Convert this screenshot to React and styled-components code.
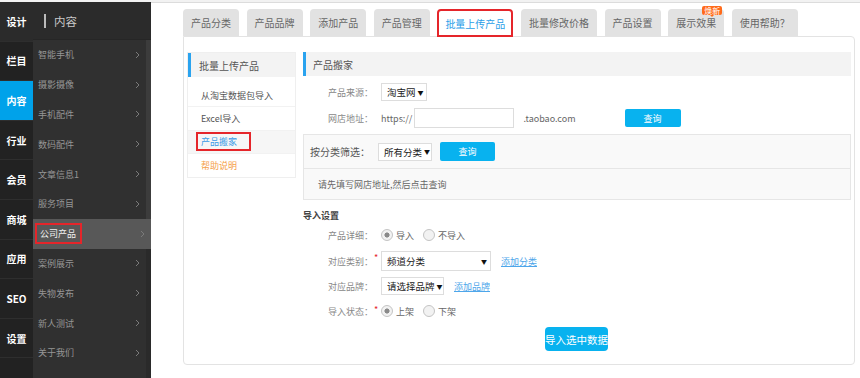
import React from "react";
import styled, { createGlobalStyle } from "styled-components";

const Global = createGlobalStyle`
  html, body { margin: 0; padding: 0; background: #fff; }
  body { font-family: "Noto Sans CJK SC", "Noto Sans", sans-serif; width: 860px; height: 378px; overflow: hidden; }
  * { box-sizing: border-box; }
`;

const Page = styled.div`
  display: flex;
  width: 860px;
  height: 378px;
  border-top: 2px solid #f2f2f2;
`;

/* ---------- left rail ---------- */
const Rail = styled.nav`
  width: 33px;
  background: #222;
  display: flex;
  flex-direction: column;
`;
const RailItem = styled.div`
  height: 39.6px;
  flex: none;
  display: flex;
  align-items: center;
  justify-content: center;
  color: #fff;
  font-size: 10px;
  font-weight: 700;
  border-bottom: 1px solid #2e2e2e;
  background: ${(p) => (p.$active ? "#00a2ea" : p.$head ? "#2b2b2b" : "#222")};
`;

/* ---------- sub menu ---------- */
const Sub = styled.aside`
  width: 118px;
  background: #303030;
  display: flex;
  flex-direction: column;
`;
const SubHead = styled.div`
  height: 38px;
  flex: none;
  background: #2b2b2b;
  display: flex;
  align-items: center;
  padding-left: 11px;
  gap: 8px;
  color: #c8c8c8;
  font-size: 11.5px;
  border-bottom: 1px solid #262626;
`;
const HeadBar = styled.span`
  width: 2px;
  height: 14px;
  background: #bbb;
`;
const SubBody = styled.div`
  flex: 1;
  display: flex;
`;
const SubList = styled.ul`
  list-style: none;
  margin: 0;
  padding: 0;
  flex: 1;
`;
const SubItem = styled.li`
  height: 29.8px;
  display: flex;
  align-items: center;
  justify-content: space-between;
  padding: 0 6px 0 5px;
  margin-right: ${(p) => (p.$active ? "-5px" : "0")};
  position: relative;
  z-index: 1;
  font-size: 9px;
  color: ${(p) => (p.$active ? "#f0f0f0" : "#969696")};
  background: ${(p) => (p.$active ? "#585858" : "transparent")};
`;
const Track = styled.div`
  width: 5px;
  background: #2a2a2a;
`;
const Thumb = styled.div`
  height: 180px;
  background: #3c3c3c;
`;
const Marked = styled.span`
  display: inline-flex;
  align-items: center;
  border: 2px solid #e5252a;
  padding: ${(p) => p.$pad || "2px 4px 2px 3px"};
  margin-left: ${(p) => p.$ml || "-3px"};
`;

const Chevron = () => (
  <svg width="5" height="8" viewBox="0 0 5 8">
    <path d="M1 1 L4 4 L1 7" fill="none" stroke="#7a7a7a" strokeWidth="1" />
  </svg>
);

/* ---------- main ---------- */
const Main = styled.main`
  flex: 1;
  background: #fff;
  border-top: 1px solid #dcdcdc;
  padding: 6px 0 0 32px;
  display: flex;
  flex-direction: column;
`;
const Tabs = styled.div`
  display: flex;
  gap: 7.6px;
  height: 27px;
`;
const Tab = styled.div`
  position: relative;
  height: 27px;
  padding: 0 8px;
  display: flex;
  align-items: center;
  font-size: 10px;
  white-space: nowrap;
  border-radius: 4px 4px 0 0;
  color: ${(p) => (p.$active ? "#2a9ee8" : "#666")};
  background: ${(p) => (p.$active ? "#fff" : "#e2e2e2")};
  border: ${(p) => (p.$active ? "2px solid #e5252a" : "none")};
  ${(p) => p.$active && "padding: 0 6px; height: 28px; z-index: 2;"}
`;
const Badge = styled.span`
  position: absolute;
  top: -3px;
  right: 2px;
  background: #ff6a1a;
  color: #fff;
  font-size: 8px;
  line-height: 9px;
  padding: 0 2px;
  border-radius: 2px;
  &::after {
    content: "";
    position: absolute;
    left: 50%;
    bottom: -2px;
    margin-left: -2px;
    border: 2px solid transparent;
    border-bottom: none;
    border-top-color: #ff6a1a;
  }
`;
const Panel = styled.section`
  width: 672px;
  height: 329px;
  border: 1px solid #e3e3e3;
  border-radius: 0 4px 4px 4px;
  padding: 15px 3px 0 3px;
  display: flex;
  gap: 7px;
  align-items: flex-start;
`;

/* side box */
const SideBox = styled.div`
  width: 109px;
  border: 1px solid #efefef;
`;
const SectionHead = styled.div`
  height: 24px;
  display: flex;
  align-items: center;
  background: #f3f3f3;
  border-left: 3px solid #2aa3ef;
  padding-left: ${(p) => p.$pl || "8px"};
  font-size: 10px;
  color: #555;
`;
const SideList = styled.ul`
  list-style: none;
  margin: 7px 0 0;
  padding: 0;
`;
const SideItem = styled.li`
  height: 23.3px;
  display: flex;
  align-items: center;
  padding-left: 13px;
  font-size: 9px;
  color: ${(p) => p.$color || "#555"};
  background: ${(p) => (p.$sel ? "#f6f6f6" : "transparent")};
  border-bottom: ${(p) => (p.$last ? "none" : "1px solid #f2f2f2")};
`;

/* content */
const Content = styled.div`
  width: 548px;
  display: flex;
  flex-direction: column;
`;
const Row = styled.div`
  display: flex;
  align-items: center;
  height: ${(p) => p.$h || "18px"};
  margin-top: ${(p) => p.$mt || "7px"};
`;
const Label = styled.span`
  width: 70px;
  flex: none;
  text-align: right;
  font-size: 9px;
  color: #888;
  margin-right: ${(p) => (p.$star ? "1px" : "8px")};
  white-space: nowrap;
`;
const Star = styled.span`
  color: #e5252a;
  font-size: 9px;
  width: 7px;
  align-self: flex-start;
  line-height: 14px;
`;
const Select = styled.div`
  flex: none;
  width: ${(p) => p.$w}px;
  height: ${(p) => p.$h || 18}px;
  border: 1px solid #ddd;
  background: #fff;
  display: flex;
  align-items: center;
  justify-content: space-between;
  padding: 0 3px 0 5px;
  font-size: 9.5px;
  color: #222;
  white-space: nowrap;
  overflow: hidden;
  margin-left: ${(p) => p.$ml || "0"};
  &::after {
    content: "▼";
    font-size: 6px;
    color: #111;
    margin-left: 2px;
  }
`;
const Plain = styled.span`
  font-size: 9px;
  color: #666;
  white-space: nowrap;
  margin-left: ${(p) => p.$ml || "0"};
`;
const Input = styled.div`
  width: 100px;
  height: 20px;
  border: 1px solid #ddd;
  margin-left: 2px;
`;
const Button = styled.button`
  flex: none;
  width: ${(p) => p.$w}px;
  height: ${(p) => p.$h || 18}px;
  border: none;
  border-radius: ${(p) => p.$r || "2px"};
  background: #08b2ef;
  color: #fff;
  font-family: inherit;
  font-size: ${(p) => p.$fs || "9px"};
  padding: 0;
  margin-left: ${(p) => p.$ml || "0"};
  white-space: nowrap;
`;
const Filter = styled.div`
  margin-top: 6px;
  border: 1px solid #e6e6e6;
  background: #f9f9f9;
`;
const FilterTop = styled.div`
  height: 34px;
  display: flex;
  align-items: center;
  padding-left: 6px;
  border-bottom: 1px solid #e6e6e6;
  font-size: 10px;
  color: #555;
`;
const FilterNote = styled.div`
  height: 30px;
  display: flex;
  align-items: center;
  padding-left: 14px;
  font-size: 9px;
  color: #666;
`;
const SubTitle = styled.div`
  margin-top: 9px;
  font-size: 9px;
  font-weight: 700;
  color: #444;
  height: 14px;
  line-height: 14px;
`;
const Radio = styled.span`
  display: inline-flex;
  align-items: center;
  gap: 3px;
  font-size: 9px;
  color: #666;
  margin-right: 9px;
  &::before {
    content: "";
    width: 10px;
    height: 10px;
    border-radius: 50%;
    border: 1px solid #c4c4c4;
    background: ${(p) =>
      p.$on ? "radial-gradient(circle, #8a8a8a 0 2.3px, #f2f2f2 2.8px)" : "#f2f2f2"};
  }
`;
const Link = styled.a`
  font-size: 9px;
  color: #4ea6ea;
  text-decoration: underline;
  margin-left: 10px;
`;
const Submit = styled.div`
  display: flex;
  margin-top: 8px;
  padding-left: 242px;
`;

const subItems = [
  "智能手机", "摄影摄像", "手机配件", "数码配件", "文章信息1", "服务项目",
  "公司产品", "案例展示", "失物发布", "新人测试", "关于我们",
];
const rail = ["栏目", "内容", "行业", "会员", "商城", "应用", "SEO", "设置"];
const tabs = [
  "产品分类", "产品品牌", "添加产品", "产品管理", "批量上传产品",
  "批量修改价格", "产品设置", "展示效果", "使用帮助？",
];

export default function App() {
  return (
    <>
      <Global />
      <Page>
        <Rail>
          <RailItem $head>设计</RailItem>
          {rail.map((r) => (
            <RailItem key={r} $active={r === "内容"}>{r}</RailItem>
          ))}
        </Rail>
        <Sub>
          <SubHead>
            <HeadBar />
            内容
          </SubHead>
          <SubBody>
            <SubList>
              {subItems.map((s) => (
                <SubItem key={s} $active={s === "公司产品"}>
                  {s === "公司产品" ? <Marked>{s}</Marked> : s}
                  <Chevron />
                </SubItem>
              ))}
            </SubList>
            <Track>
              <Thumb />
            </Track>
          </SubBody>
        </Sub>
        <Main>
          <Tabs>
            {tabs.map((t) => (
              <Tab key={t} $active={t === "批量上传产品"}>
                {t}
                {t === "展示效果" && <Badge>焕新</Badge>}
              </Tab>
            ))}
          </Tabs>
          <Panel>
            <SideBox>
              <SectionHead>批量上传产品</SectionHead>
              <SideList>
                <SideItem>从淘宝数据包导入</SideItem>
                <SideItem>Excel导入</SideItem>
                <SideItem $sel $color="#3a9be6">
                  <Marked $pad="1px 12px 1px 3px" $ml="-5px">产品搬家</Marked>
                </SideItem>
                <SideItem $last $color="#f5a04a">帮助说明</SideItem>
              </SideList>
            </SideBox>
            <Content>
              <SectionHead $pl="7px">产品搬家</SectionHead>
              <Row $mt="7px">
                <Label>产品来源：</Label>
                <Select $w={46}>淘宝网</Select>
              </Row>
              <Row $mt="7px" $h="20px">
                <Label>网店地址：</Label>
                <Plain>https://</Plain>
                <Input />
                <Plain $ml="9px">.taobao.com</Plain>
                <Button $w={56} $ml="49px">查询</Button>
              </Row>
              <Filter>
                <FilterTop>
                  按分类筛选：
                  <Select $w={54} $ml="8px">所有分类</Select>
                  <Button $w={55} $h={19} $ml="8px">查询</Button>
                </FilterTop>
                <FilterNote>请先填写网店地址,然后点击查询</FilterNote>
              </Filter>
              <SubTitle>导入设置</SubTitle>
              <Row $mt="4px" $h="16px">
                <Label>产品详细：</Label>
                <Radio $on>导入</Radio>
                <Radio>不导入</Radio>
              </Row>
              <Row $mt="8px" $h="20px">
                <Label $star>对应类别：</Label>
                <Star>*</Star>
                <Select $w={110} $h={20}>频道分类</Select>
                <Link>添加分类</Link>
              </Row>
              <Row $mt="6px" $h="18px">
                <Label>对应品牌：</Label>
                <Select $w={63}>请选择品牌</Select>
                <Link>添加品牌</Link>
              </Row>
              <Row $mt="8px" $h="16px">
                <Label $star>导入状态：</Label>
                <Star>*</Star>
                <Radio $on>上架</Radio>
                <Radio>下架</Radio>
              </Row>
              <Submit>
                <Button $w={63} $h={24} $r="4px" $fs="10.5px">导入选中数据</Button>
              </Submit>
            </Content>
          </Panel>
        </Main>
      </Page>
    </>
  );
}
